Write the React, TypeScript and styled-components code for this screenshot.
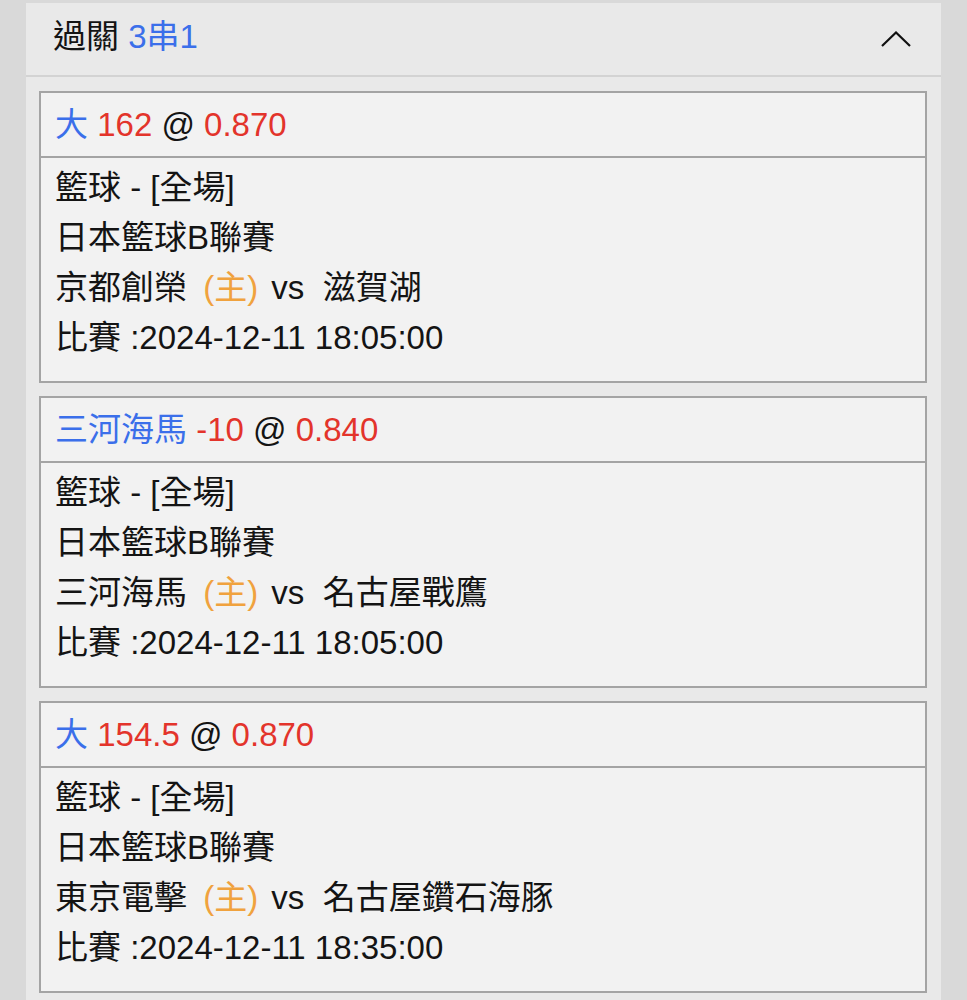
import React from "react";
import styled, { createGlobalStyle } from "styled-components";

const Global = createGlobalStyle`
  html, body { margin: 0; padding: 0; }
  body {
    background: #d9d9d9;
    font-family: "Liberation Sans", "Noto Sans CJK TC", sans-serif;
    color: #141414;
  }
`;

const Panel = styled.div`
  margin: 3px 26px 0;
  background: #e9e9e9;
  min-height: 997px;
`;

const Header = styled.div`
  height: 72px;
  display: flex;
  align-items: center;
  justify-content: space-between;
  padding: 0 30px 0 27px;
  border-bottom: 2px solid #d3d3d3;
`;

const HeaderTitle = styled.div`
  font-size: 33px;
  line-height: 40px;
  white-space: pre;
  margin-top: -4px;
`;

const Blue = styled.span`
  color: #3b6fea;
`;
const Red = styled.span`
  color: #e3342b;
`;
const Orange = styled.span`
  color: #f0a23e;
  margin: 0 4px 0 7px;
`;

const List = styled.div`
  display: flex;
  flex-direction: column;
  gap: 13px;
  padding: 14px 14px 14px 13px;
`;

const Card = styled.div`
  border: 2px solid #a4a4a4;
  background: #f2f2f2;
`;

const CardTitle = styled.div`
  height: 63px;
  line-height: 63px;
  padding-left: 14px;
  border-bottom: 2px solid #a4a4a4;
  font-size: 33px;
  white-space: pre;
`;

const CardBody = styled.div`
  padding: 5px 14px 18px 14px;
  font-size: 33px;
  line-height: 50px;
`;

const Line = styled.div`
  white-space: pre;
`;

type Bet = {
  pick: string;
  line: string;
  odds: string;
  league: string;
  home: string;
  away: string;
  time: string;
};

const bets: Bet[] = [
  { pick: "大", line: "162", odds: "0.870", league: "日本籃球B聯賽", home: "京都創榮", away: "滋賀湖", time: "2024-12-11 18:05:00" },
  { pick: "三河海馬", line: "-10", odds: "0.840", league: "日本籃球B聯賽", home: "三河海馬", away: "名古屋戰鷹", time: "2024-12-11 18:05:00" },
  { pick: "大", line: "154.5", odds: "0.870", league: "日本籃球B聯賽", home: "東京電擊", away: "名古屋鑽石海豚", time: "2024-12-11 18:35:00" },
];

export default function App() {
  return (
    <>
      <Global />
      <Panel>
        <Header>
          <HeaderTitle>
            過關 <Blue>3串1</Blue>
          </HeaderTitle>
          <svg width="30" height="16" viewBox="0 0 30 16" fill="none">
            <polyline points="1,15 15,1.5 29,15" stroke="#111" strokeWidth="2.2" />
          </svg>
        </Header>
        <List>
          {bets.map((b, i) => (
            <Card key={i}>
              <CardTitle>
                <Blue>{b.pick}</Blue>{" "}<Red>{b.line}</Red>{" @ "}<Red>{b.odds}</Red>
              </CardTitle>
              <CardBody>
                <Line>籃球 - [全場]</Line>
                <Line>{b.league}</Line>
                <Line>
                  {b.home}{" "}<Orange>(主)</Orange>{" vs  "}{b.away}
                </Line>
                <Line>比賽 :{b.time}</Line>
              </CardBody>
            </Card>
          ))}
        </List>
      </Panel>
    </>
  );
}
